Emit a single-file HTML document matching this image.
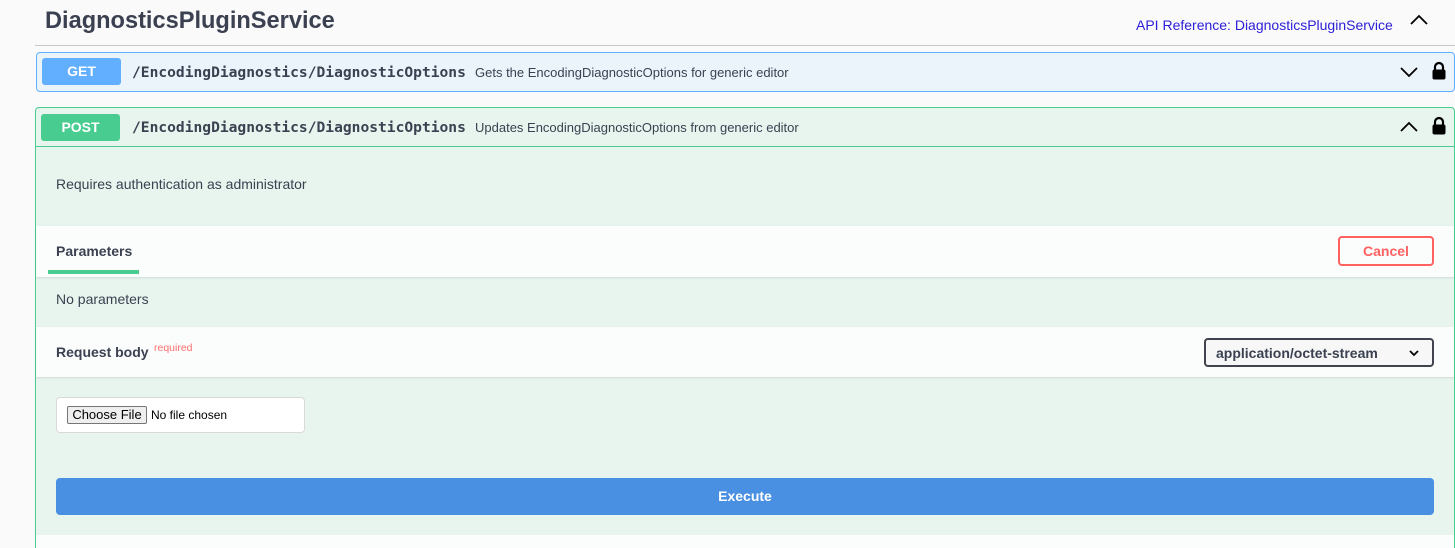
<!DOCTYPE html>
<html style="overflow:hidden;width:1455px;height:548px"><head><style>
*{box-sizing:border-box;margin:0;padding:0}
body{width:1455px;height:548px;overflow:hidden;background:#fafafa;font-family:"Liberation Sans",sans-serif;color:#3b4151;position:relative}
.abs{position:absolute}
.mono{font-family:"DejaVu Sans Mono",monospace;font-weight:bold;font-size:14.6px;color:#3b4151}
.badge{position:absolute;left:5px;width:79px;height:27px;border-radius:3px;color:#fff;font-weight:bold;font-size:14px;text-align:center;line-height:27px}
</style></head><body>
<div class="abs" style="left:45px;top:8px;font-size:23.6px;font-weight:bold">DiagnosticsPluginService</div>
<div class="abs" style="left:1136px;top:17px;font-size:14px;color:#2c1dd6">API Reference: DiagnosticsPluginService</div>
<svg class="abs" style="left:1409px;top:14px" width="20" height="14" viewBox="0 0 20 14"><path d="M2 10 L10 2 L18 10" fill="none" stroke="#000" stroke-width="1.8"/></svg>
<div class="abs" style="left:35px;top:45px;width:1420px;height:1px;background:#c6c8cc"></div>

<div class="abs" style="left:36px;top:52px;width:1419px;height:40px;border:1px solid #61affe;border-radius:4px;background:#ebf3fb">
 <div class="badge" style="top:5px;background:#61affe">GET</div>
 <div class="abs mono" style="left:95px;top:11px">/EncodingDiagnostics/DiagnosticOptions</div>
 <div class="abs" style="left:438px;top:12px;font-size:13px">Gets the EncodingDiagnosticOptions for generic editor</div>
 <svg class="abs" style="left:1362px;top:12px" width="20" height="14" viewBox="0 0 20 14"><path d="M2 3 L10 11 L18 3" fill="none" stroke="#000" stroke-width="1.8"/></svg>
 <svg class="abs" style="left:1394px;top:8px" width="16" height="20" viewBox="0 0 16 20"><path d="M4 9 V6 a4 4 0 0 1 8 0 V9" fill="none" stroke="#000" stroke-width="2.2"/><rect x="1.5" y="8.5" width="13" height="10" rx="2" fill="#000"/></svg>
</div>

<div class="abs" style="left:35px;top:107px;width:1420px;height:441px;border:1px solid #49cc90;border-bottom:none;border-radius:4px 4px 0 0;background:#e7f5ee">
 <div class="abs" style="left:0;top:0;width:1418px;height:39px;border-bottom:1px solid #49cc90">
  <div class="badge" style="top:6px;background:#49cc90">POST</div>
  <div class="abs mono" style="left:96px;top:11px">/EncodingDiagnostics/DiagnosticOptions</div>
  <div class="abs" style="left:439px;top:12px;font-size:13px">Updates EncodingDiagnosticOptions from generic editor</div>
  <svg class="abs" style="left:1363px;top:12px" width="20" height="14" viewBox="0 0 20 14"><path d="M2 11 L10 3 L18 11" fill="none" stroke="#000" stroke-width="1.8"/></svg>
  <svg class="abs" style="left:1395px;top:8px" width="16" height="20" viewBox="0 0 16 20"><path d="M4 9 V6 a4 4 0 0 1 8 0 V9" fill="none" stroke="#000" stroke-width="2.2"/><rect x="1.5" y="8.5" width="13" height="10" rx="2" fill="#000"/></svg>
 </div>
 <div class="abs" style="left:20px;top:68px;font-size:14px">Requires authentication as administrator</div>
 <div class="abs" style="left:0;top:118px;width:1418px;height:51px;background:#fbfcfc;box-shadow:0 1px 2px rgba(0,0,0,.1)">
  <div class="abs" style="left:20px;top:17px;font-size:14px;font-weight:bold">Parameters</div>
  <div class="abs" style="left:12px;top:44px;width:91px;height:4px;background:#49cc90"></div>
  <div class="abs" style="left:1302px;top:10px;width:96px;height:30px;border:2px solid #ff6060;border-radius:4px;color:#ff6060;font-weight:bold;font-size:14px;text-align:center;line-height:26px">Cancel</div>
 </div>
 <div class="abs" style="left:20px;top:183px;font-size:14px">No parameters</div>
 <div class="abs" style="left:0;top:219px;width:1418px;height:50px;background:#fbfcfc;box-shadow:0 1px 2px rgba(0,0,0,.1)">
  <div class="abs" style="left:20px;top:17px;font-size:14px;font-weight:bold">Request body</div>
  <div class="abs" style="left:118px;top:15px;font-size:10.5px;color:#ff6f6f">required</div>
  <div class="abs" style="left:1168px;top:11px;width:230px;height:29px;border:2px solid #41444e;border-radius:4px;background:#f7f7f7;font-size:14px;font-weight:bold;padding:5px 0 0 10px">application/octet-stream
   <svg class="abs" style="left:202px;top:9px" width="12" height="8" viewBox="0 0 12 8"><path d="M2 2 L6 6 L10 2" fill="none" stroke="#000" stroke-width="1.8"/></svg></div>
 </div>
 <div class="abs" style="left:20px;top:289px;width:249px;height:36px;border:1px solid #d9d9d9;border-radius:4px;background:#fff">
  <div class="abs" style="left:10px;top:8px;width:80px;height:18px;border:1px solid #767676;border-radius:2px;background:#efefef;font-size:13px;color:#000;text-align:center;line-height:16px">Choose File</div>
  <div class="abs" style="left:94px;top:10px;font-size:12px;color:#000">No file chosen</div>
 </div>
 <div class="abs" style="left:20px;top:370px;width:1378px;height:37px;background:#4990e2;border-radius:4px;color:#fff;font-weight:bold;font-size:14px;text-align:center;line-height:37px">Execute</div>
 <div class="abs" style="left:0;top:427px;width:1418px;height:40px;background:#fbfcfc"></div>
</div>
</body></html>
